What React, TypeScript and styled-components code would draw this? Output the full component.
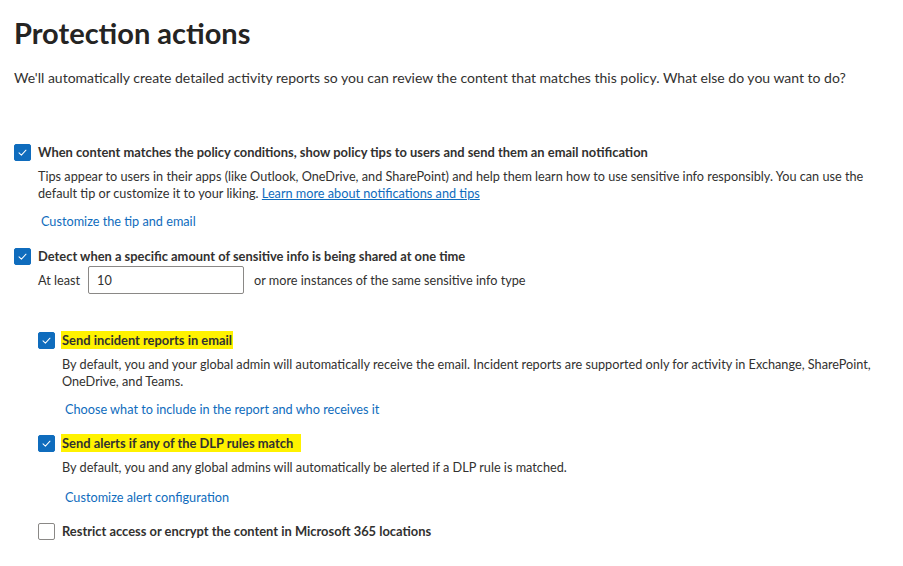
import React from "react";
import styled, { createGlobalStyle } from "styled-components";

const GlobalStyle = createGlobalStyle`
  html, body {
    margin: 0;
    padding: 0;
    background: #ffffff;
  }
  body {
    font-family: Lato, "Open Sans", "Liberation Sans", sans-serif;
    color: #323130;
  }
`;

interface CheckProps {
  checked?: boolean;
}

const CheckIcon = () => (
  <svg width="11" height="11" viewBox="0 0 12 12" fill="none">
    <path d="M2.2 6.3l2.6 2.6 5-5.4" stroke="#ffffff" strokeWidth="1.1" strokeLinecap="round" strokeLinejoin="round" />
  </svg>
);

const Checkbox = ({ checked }: CheckProps) => (
  <Box checked={checked}>{checked && <CheckIcon />}</Box>
);

const App = () => {
  return (
    <>
      <GlobalStyle />
      <Page>
        <Title>Protection actions</Title>
        <Intro>
          We'll automatically create detailed activity reports so you can review the content that matches this policy. What else do you want to do?
        </Intro>

        <Option>
          <Checkbox checked />
          <Label>When content matches the policy conditions, show policy tips to users and send them an email notification</Label>
        </Option>
        <Body>
          <Desc>
            Tips appear to users in their apps (like Outlook, OneDrive, and SharePoint) and help them learn how to use sensitive info responsibly. You can use the default tip or customize it to your liking.{" "}
            <Underlined href="#">Learn more about notifications and tips</Underlined>
          </Desc>
          <ActionLink href="#" gap={11}>Customize the tip and email</ActionLink>
        </Body>

        <Option top={18}>
          <Checkbox checked />
          <Label>Detect when a specific amount of sensitive info is being shared at one time</Label>
        </Option>
        <Body>
          <CountRow>
            <span>At least</span>
            <CountInput defaultValue="10" />
            <span>or more instances of the same sensitive info type</span>
          </CountRow>

          <Nested>
            <Option>
              <Checkbox checked />
              <Label>
                <Marked>Send incident reports in email</Marked>
              </Label>
            </Option>
            <Body>
              <Desc>
                By default, you and your global admin will automatically receive the email. Incident reports are supported only for activity in Exchange, SharePoint, OneDrive, and Teams.
              </Desc>
              <ActionLink href="#" gap={11}>Choose what to include in the report and who receives it</ActionLink>
            </Body>

            <Option top={17}>
              <Checkbox checked />
              <Label>
                <Marked wide>Send alerts if any of the DLP rules match</Marked>
              </Label>
            </Option>
            <Body>
              <Desc>By default, you and any global admins will automatically be alerted if a DLP rule is matched.</Desc>
              <ActionLink href="#" gap={13}>Customize alert configuration</ActionLink>
            </Body>

            <Option top={17}>
              <Checkbox />
              <Label>Restrict access or encrypt the content in Microsoft 365 locations</Label>
            </Option>
          </Nested>
        </Body>
      </Page>
    </>
  );
};

export default App;

const Page = styled.div`
  padding: 14px 20px 20px 14px;
  font-size: 12.7px;
  line-height: 17px;
`;

const Title = styled.h1`
  margin: 0;
  font-size: 29px;
  line-height: 38px;
  font-weight: 700;
  color: #252423;
`;

const Intro = styled.p`
  margin: 16px 0 56px;
  font-size: 14px;
  line-height: 20px;
`;

const Option = styled.div<{ top?: number }>`
  display: flex;
  align-items: center;
  gap: 7px;
  margin-top: ${(p) => p.top ?? 0}px;
`;

const Box = styled.span<CheckProps>`
  width: 17px;
  height: 17px;
  flex: none;
  box-sizing: border-box;
  border-radius: 2px;
  display: flex;
  align-items: center;
  justify-content: center;
  background: ${(p) => (p.checked ? "#0f6cbd" : "#ffffff")};
  border: 1px solid ${(p) => (p.checked ? "#0f6cbd" : "#8a8886")};
`;

const Label = styled.span`
  font-size: 12.9px;
  font-weight: 700;
  color: #323130;
`;

const Marked = styled.span<{ wide?: boolean }>`
  background: #fff200;
  padding: 1px ${(p) => (p.wide ? "8px" : "1px")} 1px 1px;
  margin-left: -1px;
`;

const Body = styled.div`
  padding-left: 24px;
`;

const Desc = styled.p`
  margin: 7px 0 0;
`;

const Underlined = styled.a`
  color: #0f6cbd;
  text-decoration: underline;
`;

const ActionLink = styled.a<{ gap?: number }>`
  display: block;
  margin: ${(p) => p.gap ?? 12}px 0 0 3px;
  color: #0f6cbd;
  text-decoration: none;
`;

const CountRow = styled.div`
  display: flex;
  align-items: center;
  gap: 8px;
  margin-top: 1px;
`;

const CountInput = styled.input`
  width: 156px;
  height: 28px;
  box-sizing: border-box;
  border: 1px solid #8a8886;
  border-radius: 2px;
  padding: 0 8px;
  font: inherit;
  color: #323130;
  margin-right: 2px;
`;

const Nested = styled.div`
  margin-top: 38px;
`;
